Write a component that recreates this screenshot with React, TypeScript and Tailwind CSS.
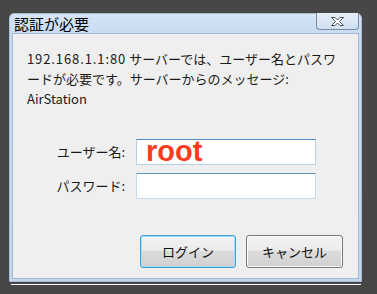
const jp = "font-['Noto_Sans_CJK_JP','Noto_Sans',sans-serif]"

function CloseGlyph() {
  return (
    <svg width="15" height="11" viewBox="0 0 15 11">
      <path
        d="M1.5 1.5 H5 L7.5 4 L10 1.5 H13.5 L9.5 5.5 L13.5 9.5 H10 L7.5 7 L5 9.5 H1.5 L5.5 5.5 Z"
        fill="#ffffff"
        stroke="#4a4f58"
        strokeWidth="1"
        strokeLinejoin="round"
      />
    </svg>
  )
}

function Win7Button({ label, focused }: { label: string; focused?: boolean }) {
  return (
    <button
      className={
        focused
          ? "h-[33px] w-[96px] rounded-[3px] border border-[#3c9fe0] shadow-[inset_0_0_0_1px_#a6dcf7] bg-[linear-gradient(#f3f3f3_0%,#ececec_45%,#dcdcdc_50%,#d0d0d0_100%)] text-[13px] text-[#111] " + jp
          : "h-[33px] w-[97px] rounded-[3px] border border-[#767676] shadow-[inset_0_0_0_1px_#fbfbfb] bg-[linear-gradient(#f3f3f3_0%,#ececec_45%,#dcdcdc_50%,#d0d0d0_100%)] text-[13px] text-[#111] " + jp
      }
    >
      {label}
    </button>
  )
}

export default function App() {
  return (
    <div className="w-[377px] h-[294px] bg-[#474747] pl-[9px] pt-[13px] overflow-hidden">
      <div className="w-[353px] h-[269px] rounded-t-[5px] bg-[linear-gradient(#d6e5f6_0px,#c8dbf1_20px,#c3d7ef_100%)] border border-[#a9bcd6] flex flex-col">
        {/* Title bar */}
        <div className="h-[19px] flex items-start justify-between pl-[4px] pr-[2px]">
          <span className={"text-[15px] leading-[19px] text-black " + jp}>認証が必要</span>
          <div className="w-[43px] h-[17px] -mt-[1px] rounded-b-[4px] border border-t-0 border-[#7b8ca4] bg-[linear-gradient(#e6eef9,#cfdff2)] flex items-center justify-center">
            <CloseGlyph />
          </div>
        </div>

        {/* Content */}
        <div className="mx-[2px] mb-[2px] flex-1 border border-[#a3b9d3] bg-[#efefef] flex flex-col">
          <div className={"pl-[14px] pt-[15px] text-[13px] leading-[20px] text-[#1a1a1a] " + jp}>
            <div>
              <span className="tracking-[0.9px]">192.168.1.1:80</span> サーバーでは、ユーザー名とパスワ
            </div>
            <div>ードが必要です。サーバーからのメッセージ:</div>
            <div>AirStation</div>
          </div>

          <div className="mt-[30px] flex flex-col gap-[8px]">
            <div className="flex items-center">
              <div className={"w-[112px] text-right text-[13px] text-[#1a1a1a] " + jp}>ユーザー名:</div>
              <div className="ml-[11px] w-[180px] h-[26px] bg-white border border-[#b8cfe6] border-t-[#4d8cc0] flex items-center pl-[9px]">
                <span className="font-['Liberation_Sans',Arial,sans-serif] font-bold text-[29px] leading-none text-[#fb3c1d] -mt-[2px]">
                  root
                </span>
              </div>
            </div>
            <div className="flex items-center">
              <div className={"w-[112px] text-right text-[13px] text-[#1a1a1a] " + jp}>パスワード:</div>
              <div className="ml-[11px] w-[180px] h-[26px] bg-white border border-[#c6d8ea] border-t-[#5d95c4]" />
            </div>
          </div>

          <div className="mt-auto mb-[10px] flex justify-end gap-[10px] pr-[15px]">
            <Win7Button label="ログイン" focused />
            <Win7Button label="キャンセル" />
          </div>
        </div>
      </div>
      <div className="ml-[2px] mt-[2px] w-[350px] h-[1px] bg-white" />
    </div>
  )
}
